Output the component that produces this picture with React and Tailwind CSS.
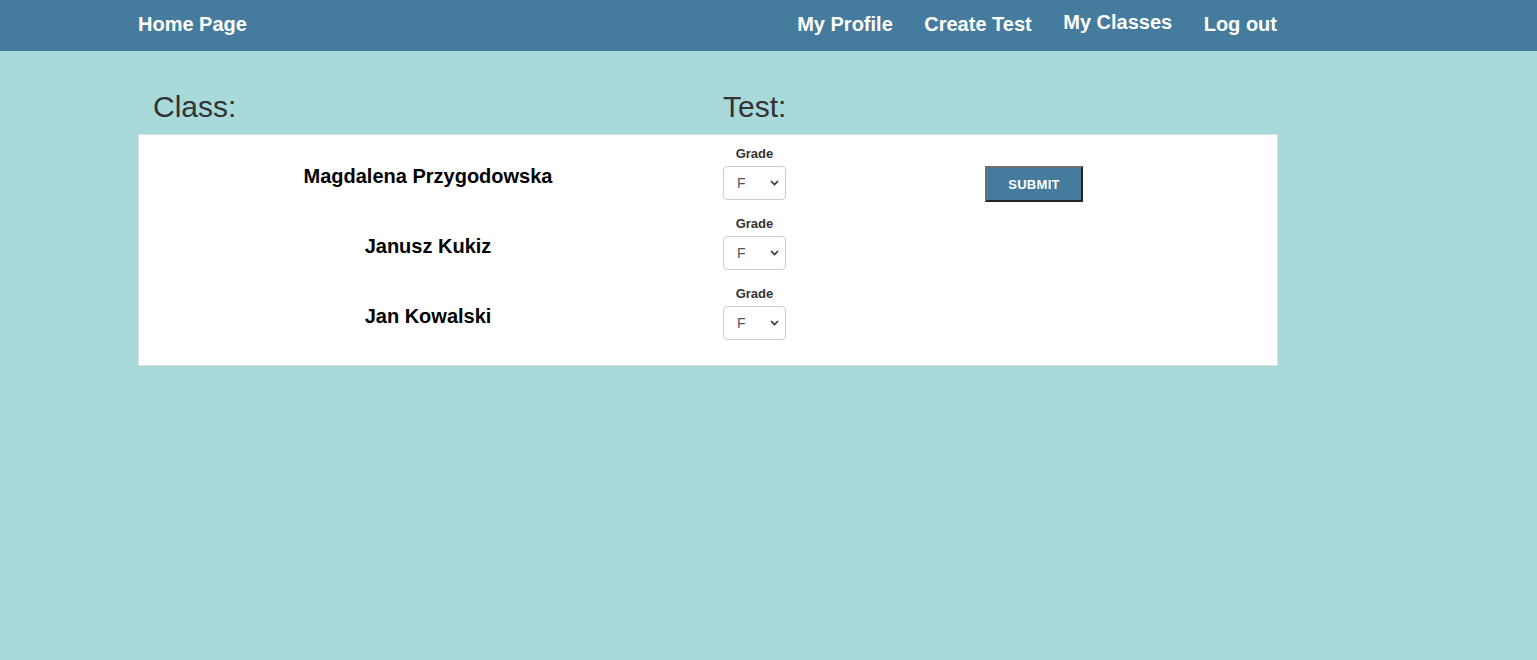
import { useState } from 'react'

const students = ['Magdalena Przygodowska', 'Janusz Kukiz', 'Jan Kowalski']
const grades = ['F', 'E', 'D', 'C', 'B', 'A']

function GradeSelect() {
  const [value, setValue] = useState('F')
  return (
    <div className="relative w-[63px] h-[34px]">
      <select
        value={value}
        onChange={(e) => setValue(e.target.value)}
        className="appearance-none w-full h-full bg-white border border-[#ccc] rounded-[4px] pl-[13px] text-[14px] text-[#555] outline-none"
      >
        {grades.map((g) => (
          <option key={g} value={g}>{g}</option>
        ))}
      </select>
      {/* chevron */}
      <svg
        className="absolute right-[7px] top-[14px] w-[9px] h-[6px] pointer-events-none"
        viewBox="0 0 9 6"
        fill="none"
        stroke="#333"
        strokeWidth="1.6"
      >
        <path d="M1 1l3.5 3.5L8 1" />
      </svg>
    </div>
  )
}

export default function App() {
  return (
    <div className="min-h-[660px] bg-[#a8dadc] font-['Liberation_Sans',Arial,sans-serif]">
      {/* Navbar */}
      <nav className="h-[51px] bg-[#457b9d]">
        <div className="ml-[138px] w-[1140px] h-full pb-[4px] flex items-center justify-between text-white text-[20px] font-bold">
          <a href="#" className="leading-[24px]">Home Page</a>
          <div className="flex items-center gap-[31.5px] mr-[1px]">
            <a href="#" className="leading-[24px]">My Profile</a>
            <a href="#" className="leading-[24px]">Create Test</a>
            <a href="#" className="leading-[24px] mb-[4px]">My Classes</a>
            <a href="#" className="leading-[24px]">Log out</a>
          </div>
        </div>
      </nav>

      <main className="ml-[138px] w-[1140px] pt-[39px]">
        {/* Headings */}
        <div className="flex h-[44px] text-[30px] leading-[34px] text-[#333]">
          <h2 className="w-[570px] pl-[15px]">Class:</h2>
          <h2 className="pl-[15px]">Test:</h2>
        </div>

        {/* Grades card */}
        <div className="bg-white border border-[#ddd] pt-[9px] pb-[11px]">
          {students.map((name, i) => (
            <div key={name} className="flex h-[70px]">
              <div className="w-[578px] pt-[20px] text-center text-[20px] leading-[24px] font-bold text-black">
                {name}
              </div>
              <div className="w-[268px] pl-[6px]">
                <div className="w-[63px] flex flex-col items-center">
                  <span className="mt-[2px] text-[13px] leading-[16px] font-bold text-[#333]">Grade</span>
                  <div className="mt-[4px]">
                    <GradeSelect />
                  </div>
                </div>
              </div>
              {i === 0 && (
                <div className="pt-[22px]">
                  <button className="w-[98px] h-[36px] pt-[2px] bg-[#457b9d] text-white text-[13px] font-bold tracking-[0.3px] border-2 border-t-[#6e6e6e] border-l-[#6e6e6e] border-r-[#222] border-b-[#222]">
                    SUBMIT
                  </button>
                </div>
              )}
            </div>
          ))}
        </div>
      </main>
    </div>
  )
}
